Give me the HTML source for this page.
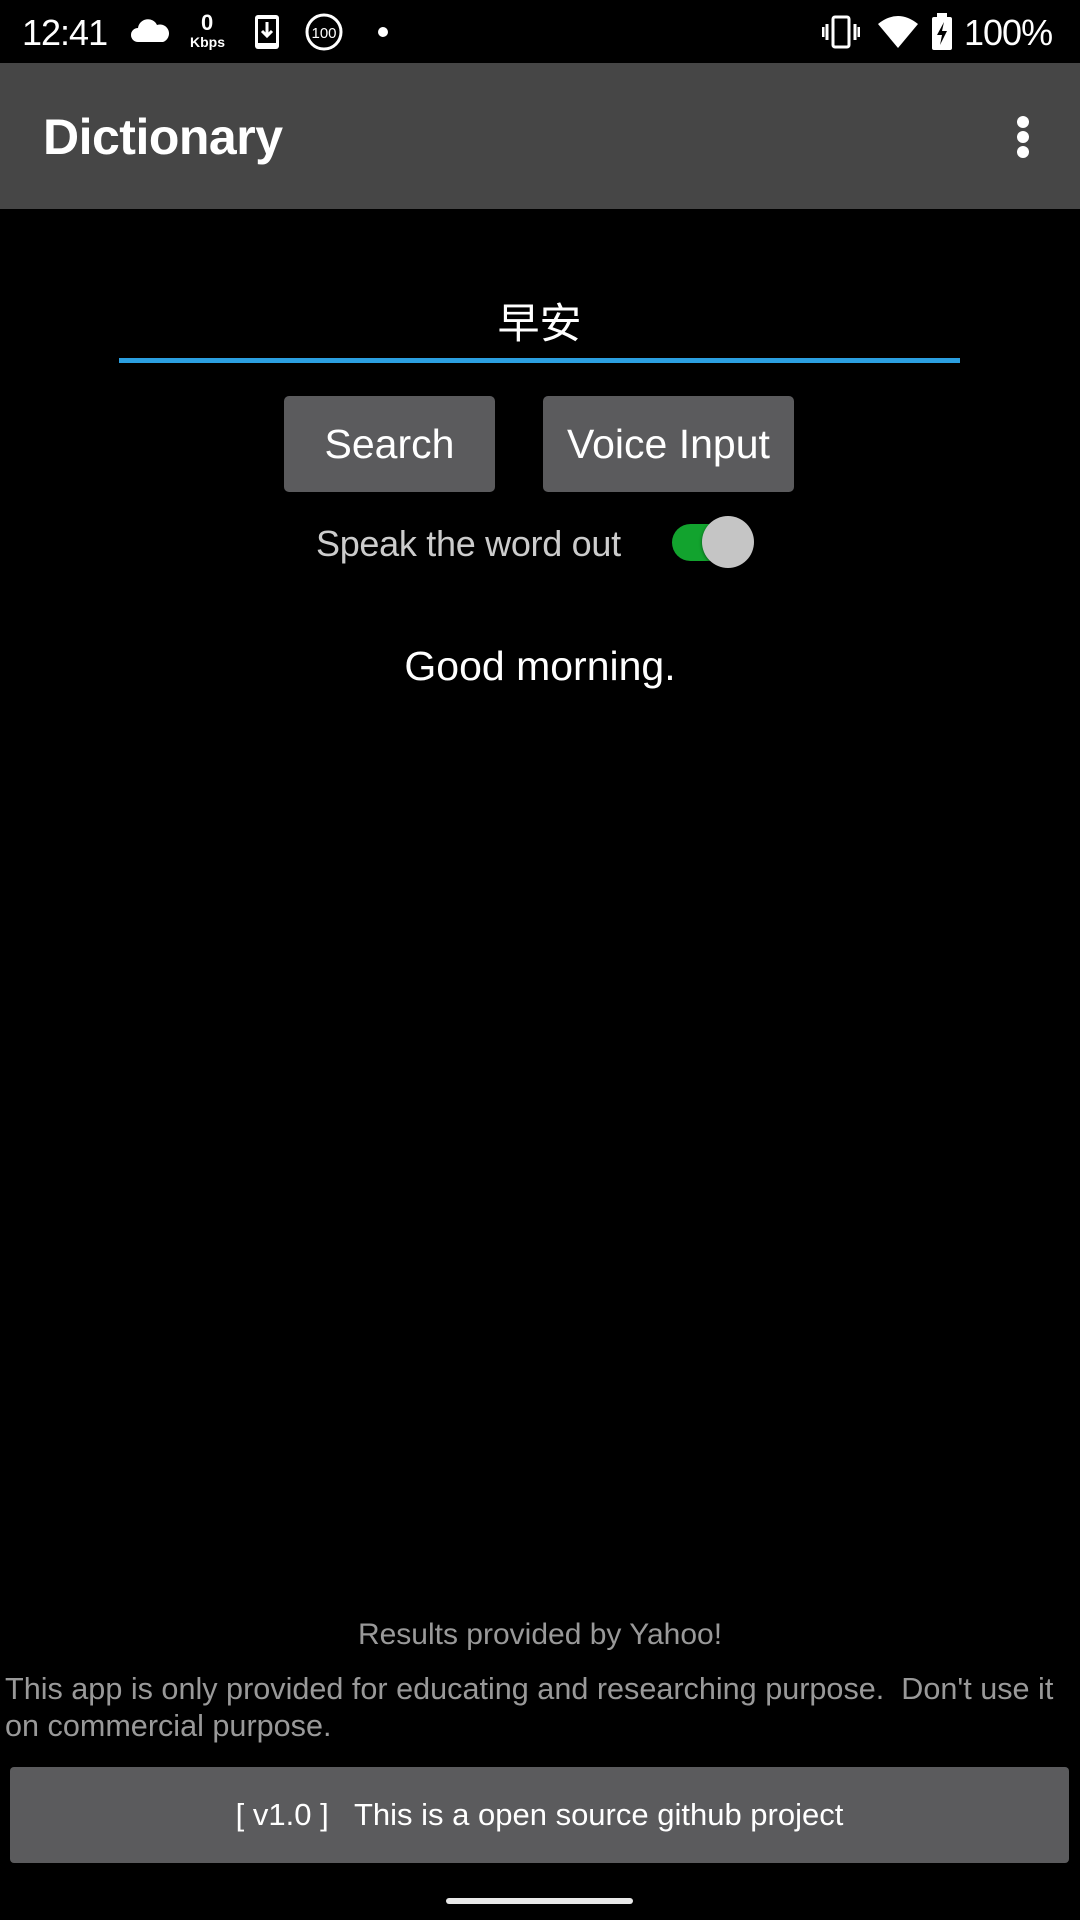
<!DOCTYPE html>
<html><head><meta charset="utf-8"><style>
*{margin:0;padding:0;box-sizing:border-box}
body{width:1080px;height:1920px;background:#000;position:relative;overflow:hidden;font-family:"Liberation Sans","Noto Sans CJK SC",sans-serif;color:#fff}
.abs{position:absolute}
.btn{position:absolute;background:#5b5b5d;border-radius:5px;color:#fff;font-size:41px;display:flex;align-items:center;justify-content:center}
</style></head><body>
<div class="abs" style="left:22px;top:12px;font-size:36px;letter-spacing:-1px">12:41</div>
<svg class="abs" style="left:130px;top:16px" width="40" height="28" viewBox="0 0 40 28"><path d="M8 26 A7 7 0 0 1 8 12 A10 10 0 0 1 27 9 A8 8 0 0 1 33 26 Z" fill="#fff"/></svg>
<div class="abs" style="left:201px;top:10px;font-size:22px;font-weight:bold">0</div>
<div class="abs" style="left:190px;top:34px;font-size:14px;font-weight:bold">Kbps</div>
<svg class="abs" style="left:254px;top:14px" width="26" height="36" viewBox="0 0 26 36"><rect x="1" y="1" width="24" height="34" rx="3" fill="#fff"/><rect x="4" y="5" width="18" height="24" fill="#000"/><path d="M13 8v14M8 17l5 5 5-5" stroke="#fff" stroke-width="3" fill="none"/></svg>
<svg class="abs" style="left:304px;top:12px" width="40" height="40" viewBox="0 0 40 40"><circle cx="20" cy="20" r="17" stroke="#fff" stroke-width="3" fill="none"/><text x="20" y="26" font-size="15" fill="#fff" text-anchor="middle" font-family="Liberation Sans">100</text></svg>
<div class="abs" style="left:378px;top:27px;width:10px;height:10px;border-radius:50%;background:#fff"></div>
<svg class="abs" style="left:822px;top:14px" width="38" height="36" viewBox="0 0 38 36"><rect x="11" y="3" width="16" height="30" rx="2" stroke="#fff" stroke-width="3" fill="none"/><path d="M5 10v16M1 13v10M33 10v16M37 13v10" stroke="#fff" stroke-width="3"/></svg>
<svg class="abs" style="left:877px;top:14px" width="42" height="36" viewBox="0 0 42 36"><path d="M1 10 Q21 -6 41 10 L21 34 Z" fill="#fff"/></svg>
<svg class="abs" style="left:931px;top:13px" width="22" height="38" viewBox="0 0 22 38"><rect x="1" y="4" width="20" height="33" rx="2" fill="#fff"/><rect x="6" y="0" width="10" height="5" fill="#fff"/><path d="M13 9 L6 22 H11 L9 32 L16 18 H11 Z" fill="#000"/></svg>
<div class="abs" style="left:964px;top:12px;font-size:36px;letter-spacing:-1px">100%</div>
<div class="abs" style="left:0;top:63px;width:1080px;height:146px;background:#464646"></div>
<div class="abs" style="left:43px;top:108px;font-size:50px;font-weight:bold;letter-spacing:-0.5px">Dictionary</div>
<div class="abs" style="left:1017px;top:116px;width:12px;height:12px;border-radius:50%;background:#fff"></div>
<div class="abs" style="left:1017px;top:131px;width:12px;height:12px;border-radius:50%;background:#fff"></div>
<div class="abs" style="left:1017px;top:146px;width:12px;height:12px;border-radius:50%;background:#fff"></div>
<div class="abs" style="left:119px;top:296px;width:841px;text-align:center;font-size:42px;line-height:56px">早安</div>
<div class="abs" style="left:119px;top:358px;width:841px;height:5px;background:#2b9fe0"></div>
<div class="btn" style="left:284px;top:396px;width:211px;height:96px">Search</div>
<div class="btn" style="left:543px;top:396px;width:251px;height:96px">Voice Input</div>
<div class="abs" style="left:316px;top:523px;font-size:36px;color:#ccc;white-space:nowrap;letter-spacing:-0.3px">Speak the word out</div>
<div class="abs" style="left:672px;top:524px;width:70px;height:37px;border-radius:19px;background:#12a32e"></div>
<div class="abs" style="left:702px;top:516px;width:52px;height:52px;border-radius:50%;background:#c5c5c5;box-shadow:0 1px 3px rgba(0,0,0,.5)"></div>
<div class="abs" style="left:0;top:643px;width:1080px;text-align:center;font-size:41px">Good morning.</div>
<div class="abs" style="left:0;top:1618px;width:1080px;text-align:center;font-size:30px;color:#999">Results provided by Yahoo!</div>
<div class="abs" style="left:5px;top:1671px;font-size:30.6px;line-height:37px;color:#999;white-space:nowrap">This app is only provided for educating and researching purpose.&nbsp; Don't use it<br>on commercial purpose.</div>
<div class="btn" style="left:10px;top:1767px;width:1059px;height:96px;font-size:31px;border-radius:4px;white-space:pre">[ v1.0 ]   This is a open source github project</div>
<div class="abs" style="left:446px;top:1898px;width:187px;height:6px;border-radius:3px;background:#e8e8e8"></div>
</body></html>
